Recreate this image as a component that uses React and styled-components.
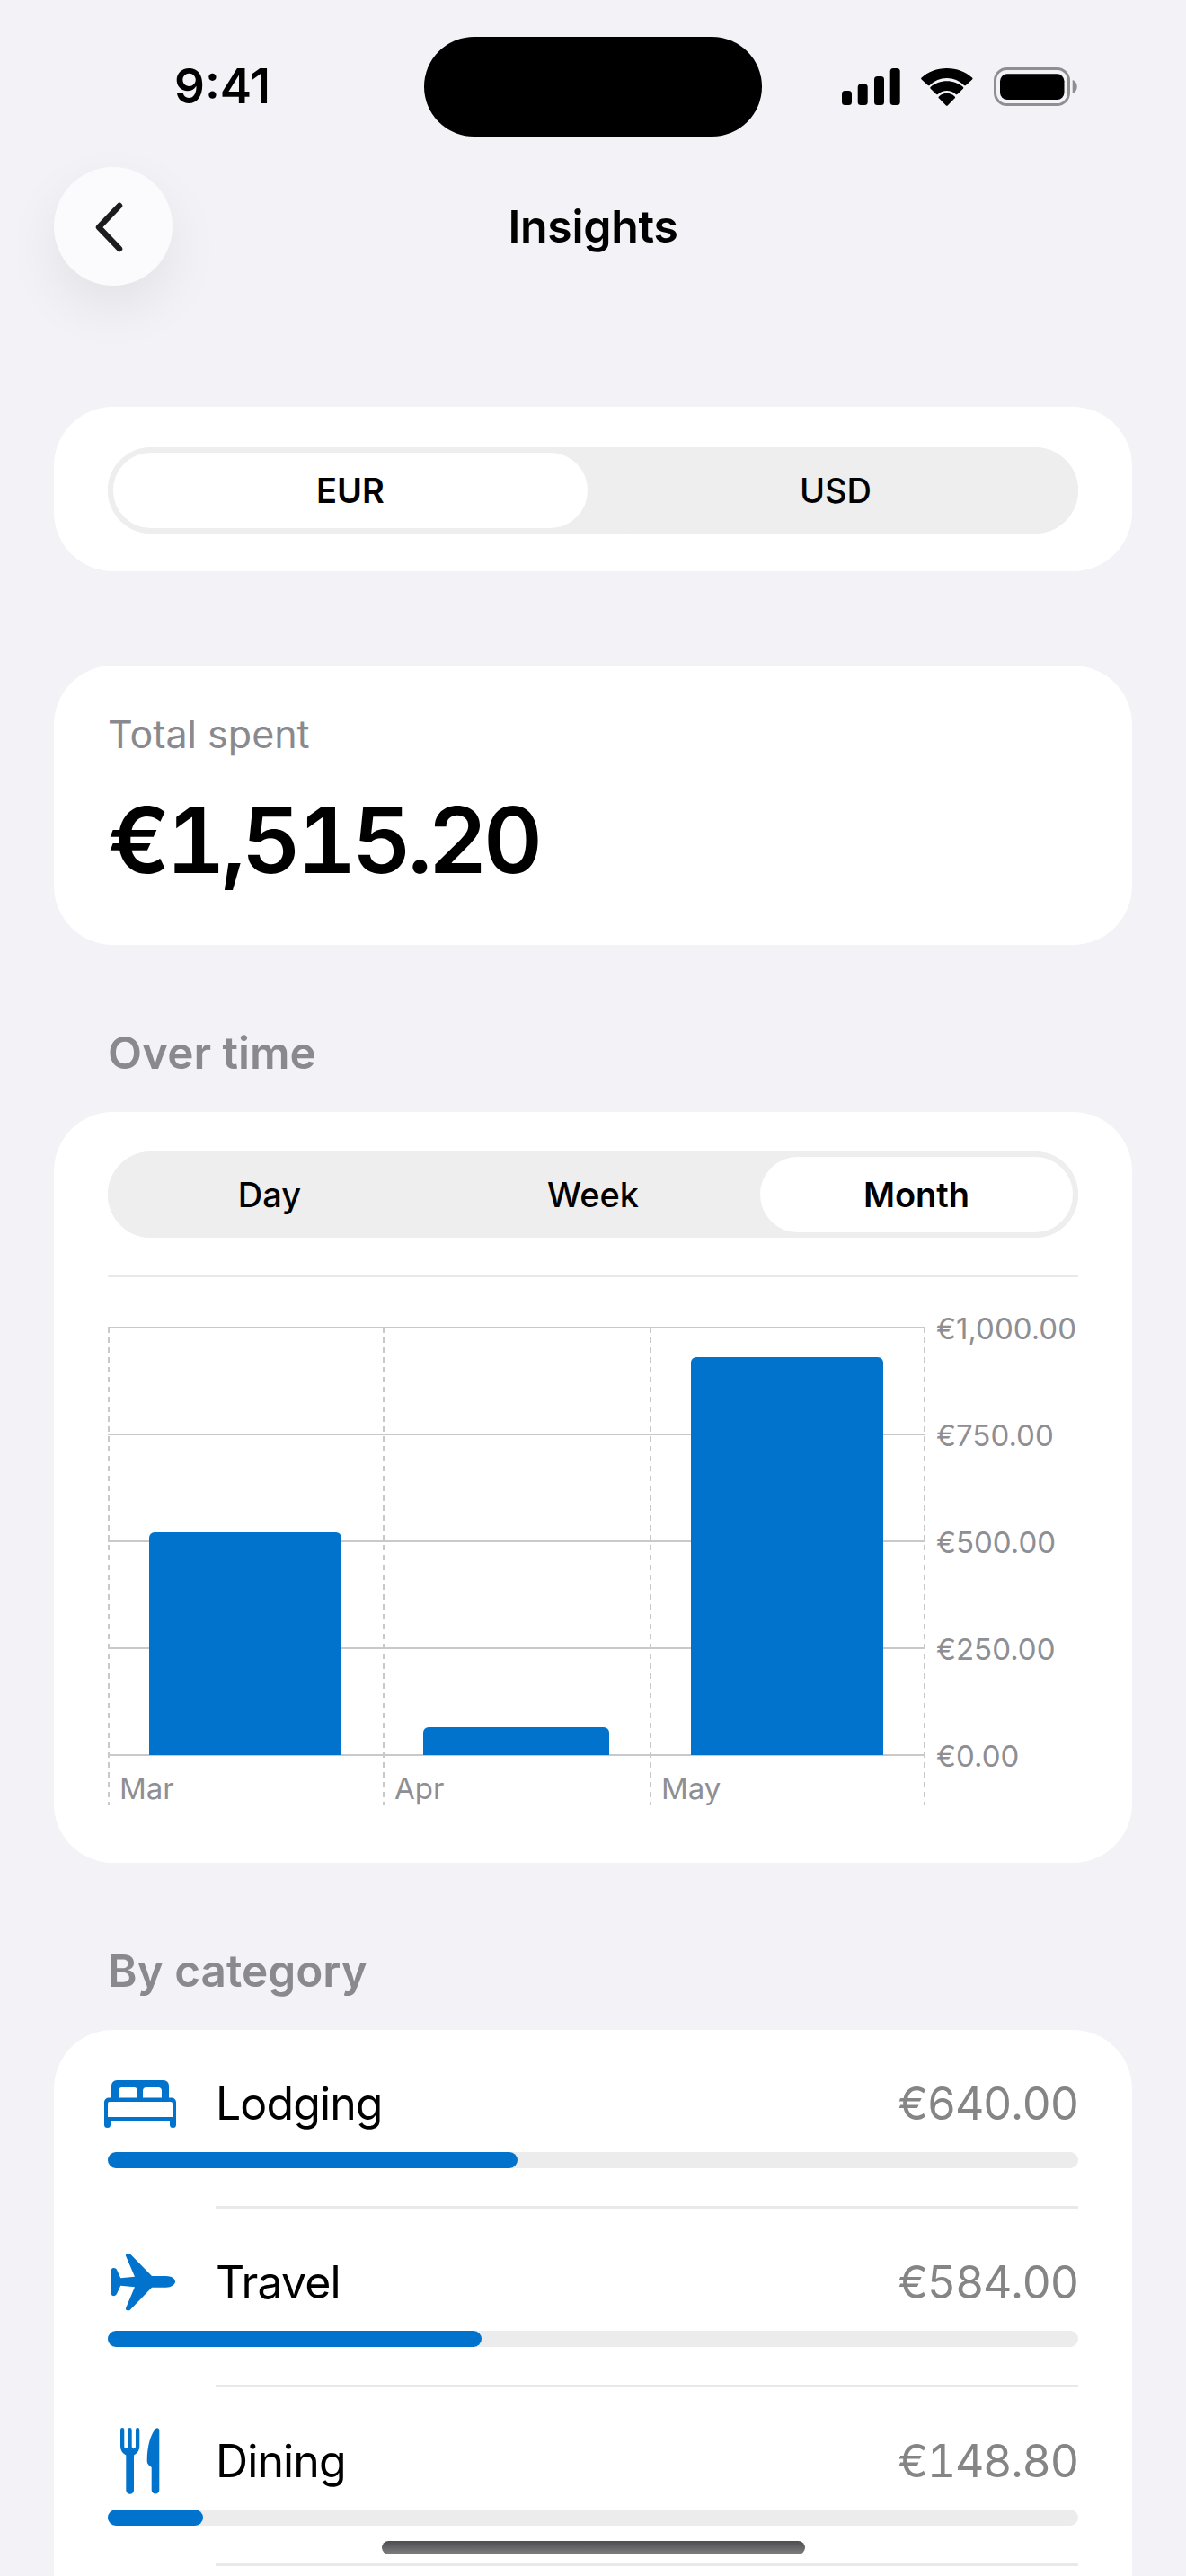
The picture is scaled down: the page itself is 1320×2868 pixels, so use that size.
import React from 'react'
import styled, { createGlobalStyle } from 'styled-components'

const GlobalStyle = createGlobalStyle`
  html, body {
    margin: 0;
    padding: 0;
    background: #f2f2f7;
    font-family: Inter, "Liberation Sans", sans-serif;
  }
`

const total = 1515.2

const categories = [
  { name: 'Lodging', amount: 640, Icon: BedIcon },
  { name: 'Travel', amount: 584, Icon: PlaneIcon },
  { name: 'Dining', amount: 148.8, Icon: DiningIcon },
]

const baseline = 502

const gridLines = [
  { y: 26, label: '€1,000.00' },
  { y: 145, label: '€750.00' },
  { y: 264, label: '€500.00' },
  { y: 383, label: '€250.00' },
  { y: 502, label: '€0.00' },
]

const months = [
  { x: 0, label: 'Mar', barX: 46, barWidth: 214, barTop: 254 },
  { x: 306, label: 'Apr', barX: 351, barWidth: 207, barTop: 471 },
  { x: 603, label: 'May', barX: 649, barWidth: 214, barTop: 59 },
]

const formatMoney = value =>
  '€' + value.toLocaleString('en-US', { minimumFractionDigits: 2, maximumFractionDigits: 2 })

function BedIcon() {
  return (
    <svg width="80" height="53" viewBox="0 0 80 53">
      <path
        fill="#0273cc"
        fillRule="evenodd"
        d="M14 0H66a6 6 0 0 1 6 6V19.5H75a5 5 0 0 1 5 5V49.5a3.5 3.5 0 0 1-7 0V45H7V49.5a3.5 3.5 0 0 1-7 0V24.5a5 5 0 0 1 5-5H8V6a6 6 0 0 1 6-6ZM20 8a4 4 0 0 0-4 4V19.5H37V12a4 4 0 0 0-4-4ZM47 8a4 4 0 0 0-4 4V19.5H64V12a4 4 0 0 0-4-4ZM6 24a2 2 0 0 0-2 2V41H76V26a2 2 0 0 0-2-2Z"
      />
    </svg>
  )
}

function PlaneIcon() {
  return (
    <PlaneSvg width="71" height="64" viewBox="0 0 71 64">
      <path
        fill="#0273cc"
        d="M1 16.5C3 15.6 5 16.4 6 18L10.3 27.3L26 25.7L16 2.5C15.5 .8 17 0 19.3 0C20.3 0 21 .5 21.7 1.3L45 25H61C66.5 25 71 27.8 71 31.3C71 34.9 66.5 37.7 61 37.7H45L21.7 61.7C21 62.6 20.3 63.3 19.3 63.3C17 63.3 15.5 62.5 16 60.8L26 37.3L10.3 35.7L6 44.7C5 46.7 3 47.7 1 46.8C.3 46.5 0 46 0 45.3V18C0 17.3 .3 16.8 1 16.5Z"
      />
    </PlaneSvg>
  )
}

function DiningIcon() {
  return (
    <svg width="44" height="74" viewBox="0 0 44 74">
      <path
        fill="#0273cc"
        d="M0 2.2a2.15 2.15 0 0 1 4.3 0V21a2 2 0 0 0 4 0V2.2a2.2 2.2 0 0 1 4.4 0V21a2.15 2.15 0 0 0 4.3 0V2.2a2.15 2.15 0 0 1 4.3 0V20c0 5-2 8-6.3 10.5V69.4a4.35 4.35 0 0 1-8.7 0V30.5C2 28 0 25 0 20Z"
      />
      <path
        fill="#0273cc"
        d="M43.3 3V69.3a4.3 4.3 0 0 1-8.6 0V44L31.7 41.5C30 40 29.7 38.5 29.7 36C29.7 20 34 7 39 1.2C41 -.7 43.3 .5 43.3 3Z"
      />
    </svg>
  )
}

function SignalIcon() {
  return (
    <svg width="65" height="41" viewBox="0 0 65 41">
      <rect x="0" y="25" width="11" height="16" rx="3.5" />
      <rect x="17.7" y="17.5" width="11" height="23.5" rx="3.5" />
      <rect x="36" y="9" width="11" height="32" rx="3.5" />
      <rect x="53.7" y="0" width="11" height="41" rx="3.5" />
    </svg>
  )
}

function WifiIcon() {
  return (
    <svg width="58" height="42" viewBox="0 0 58 42">
      <path d="M.6 10.6C8 3.9 18 0 28.8 0S49.7 3.9 57 10.6c.7.6.7 1.3.1 1.9l-7.2 6.4c-.6.6-1.2.6-1.9 0C42.8 14 36 11 28.8 11S14.9 14 9.7 18.9c-.6.6-1.3.6-1.9 0L.7 12.5C0 11.9 0 11.2.6 10.6Z" />
      <path d="M10.8 20.8C15.5 16.8 21.9 14.3 28.8 14.3S42 16.8 46.8 20.8c.7.6.7 1.3.1 1.9l-6.2 6.1c-.6.6-1.2.6-1.9.1C36.1 26.6 32.6 25 28.8 25s-7.3 1.6-10 3.9c-.6.5-1.3.5-1.9-.1l-6.2-6.1c-.6-.6-.6-1.3.1-1.9Z" />
      <path d="M20 31.4c2.4-2.2 5.5-3.6 8.8-3.6s6.4 1.4 8.8 3.6c.7.6.7 1.3.1 1.9l-7.8 7.9c-.6.7-1.6.7-2.2 0l-7.8-7.9c-.6-.6-.6-1.3.1-1.9Z" />
    </svg>
  )
}

function BatteryIcon() {
  return (
    <svg width="93" height="43" viewBox="0 0 93 43">
      <rect x="1.5" y="1.5" width="82" height="40" rx="13" fill="none" stroke="#8e8e93" strokeWidth="3" />
      <rect x="7" y="7.3" width="71.5" height="28.7" rx="8" />
      <path fill="#8e8e93" d="M87.7 14c3 .8 5 3.8 5 7.5s-2 6.7-5 7.5Z" />
    </svg>
  )
}

function ChevronIcon() {
  return (
    <svg width="132" height="132" viewBox="0 0 132 132">
      <path
        d="M73 43L50 67L73 91"
        fill="none"
        stroke="#1c1c1e"
        strokeWidth="6.5"
        strokeLinecap="round"
        strokeLinejoin="round"
      />
    </svg>
  )
}

function SpendingChart() {
  return (
    <ChartSvg viewBox="0 0 1080 562">
      {gridLines.map(line => (
        <g key={line.label}>
          <GridLine x1="0" x2="909" y1={line.y} y2={line.y} />
          <AxisLabel x="922" y={line.y + 13}>{line.label}</AxisLabel>
        </g>
      ))}
      {months.map(month => (
        <g key={month.label}>
          <DashLine x1={month.x + 1} x2={month.x + 1} y1="26" y2="558" />
          <AxisLabel x={month.x + 13} y="551">{month.label}</AxisLabel>
          <path
            fill="#0273cc"
            d={`M${month.barX} ${baseline}V${month.barTop + 6}a6 6 0 0 1 6-6H${month.barX + month.barWidth - 6}a6 6 0 0 1 6 6V${baseline}Z`}
          />
        </g>
      ))}
      <DashLine x1="909" x2="909" y1="26" y2="558" />
    </ChartSvg>
  )
}

function App() {
  return (
    <Page>
      <GlobalStyle />
      <StatusBar>
        <Time>9:41</Time>
        <Island />
        <StatusIcons>
          <SignalIcon />
          <WifiIcon />
          <BatteryIcon />
        </StatusIcons>
      </StatusBar>

      <Header>
        <BackButton aria-label="Back">
          <ChevronIcon />
        </BackButton>
        <Title>Insights</Title>
      </Header>

      <CurrencyCard>
        <Segments $count={2}>
          <Segment $active>EUR</Segment>
          <Segment>USD</Segment>
        </Segments>
      </CurrencyCard>

      <TotalCard>
        <TotalLabel>Total spent</TotalLabel>
        <TotalAmount>{formatMoney(total)}</TotalAmount>
      </TotalCard>

      <SectionTitle>Over time</SectionTitle>
      <ChartCard>
        <Segments $count={3}>
          <Segment>Day</Segment>
          <Segment>Week</Segment>
          <Segment $active>Month</Segment>
        </Segments>
        <CardDivider />
        <SpendingChart />
      </ChartCard>

      <SectionTitle>By category</SectionTitle>
      <CategoryCard>
        {categories.map(({ name, amount, Icon }) => (
          <CategoryRow key={name}>
            <CategoryHead>
              <IconSlot>
                <Icon />
              </IconSlot>
              <CategoryName>{name}</CategoryName>
              <CategoryAmount>{formatMoney(amount)}</CategoryAmount>
            </CategoryHead>
            <Track>
              <Fill style={{ width: `${(amount / total) * 100}%` }} />
            </Track>
            <RowDivider />
          </CategoryRow>
        ))}
      </CategoryCard>

      <HomeIndicator />
    </Page>
  )
}

const Page = styled.div`
  position: relative;
  width: 1320px;
  height: 2868px;
  overflow: hidden;
  background: #f2f2f7;
  color: #000;
`

const StatusBar = styled.div`
  display: grid;
  grid-template-columns: 472px 376px 1fr;
  align-items: center;
  height: 111px;
  padding-top: 41px;
`

const Time = styled.div`
  padding-left: 194px;
  font-size: 53px;
  font-weight: 600;
  line-height: 111px;
`

const Island = styled.div`
  height: 111px;
  border-radius: 56px;
  background: #000;
`

const StatusIcons = styled.div`
  display: flex;
  align-items: center;
  gap: 23px;
  padding-left: 89px;
`

const Header = styled.header`
  position: relative;
  display: flex;
  justify-content: center;
  align-items: center;
  height: 132px;
  margin-top: 34px;
`

const BackButton = styled.button`
  position: absolute;
  left: 60px;
  top: 0;
  width: 132px;
  height: 132px;
  padding: 0;
  border: 0;
  border-radius: 50%;
  background: #fbfbfd;
  box-shadow: 0 24px 60px rgba(0, 0, 0, 0.07);
`

const Title = styled.h1`
  margin: 0;
  font-size: 50px;
  font-weight: 600;
  line-height: 60px;
  letter-spacing: -0.3px;
`

const Card = styled.section`
  margin: 0 60px;
  border-radius: 66px;
  background: #fff;
`

const CurrencyCard = styled(Card)`
  margin-top: 135px;
  padding: 45px 60px 42px;
`

const TotalCard = styled(Card)`
  margin-top: 105px;
  padding: 51px 60px 57px;
`

const ChartCard = styled(Card)`
  padding: 44px 60px 60px;
`

const CategoryCard = styled(Card)`
  padding: 0 60px 120px;
`

const Segments = styled.div`
  display: grid;
  grid-template-columns: repeat(${props => props.$count}, 1fr);
  height: 96px;
  border-radius: 48px;
  background: #eeeeee;
`

const Segment = styled.div`
  display: flex;
  justify-content: center;
  align-items: center;
  border: 6px solid #eeeeee;
  border-radius: 48px;
  background: ${props => (props.$active ? '#fff' : 'transparent')};
  font-size: 38px;
  font-weight: ${props => (props.$active ? 580 : 450)};
`

const TotalLabel = styled.div`
  font-size: 43px;
  line-height: 50px;
  color: #8a8a8e;
`

const TotalAmount = styled.div`
  margin-top: 33px;
  font-size: 102px;
  font-weight: 560;
  line-height: 120px;
  font-variant-numeric: tabular-nums;
  letter-spacing: -4.5px;
`

const SectionTitle = styled.h2`
  margin: 90px 60px 36px;
  padding-left: 60px;
  font-size: 49.5px;
  font-weight: 600;
  line-height: 60px;
  color: #8a8a8e;
`

const CardDivider = styled.div`
  height: 3px;
  margin: 41px 0 30px;
  background: #e9e9ea;
`

const ChartSvg = styled.svg`
  display: block;
  width: 1080px;
  height: 562px;
`

const GridLine = styled.line`
  stroke: #c9c9cb;
  stroke-width: 2;
`

const DashLine = styled.line`
  stroke: #c9c9cb;
  stroke-width: 2;
  stroke-dasharray: 6 5;
`

const AxisLabel = styled.text`
  font-size: 33px;
  fill: #8e8e93;
`

const CategoryRow = styled.div`
  padding-top: 40px;
`

const CategoryHead = styled.div`
  display: flex;
  align-items: center;
  height: 84px;
`

const IconSlot = styled.div`
  display: flex;
  justify-content: center;
  flex: none;
  width: 72px;
  margin-right: 48px;

  svg {
    flex: none;
  }
`

const PlaneSvg = styled.svg`
  margin-left: 7px;
`

const CategoryName = styled.div`
  flex: 1;
  font-size: 50px;
  line-height: 60px;
  letter-spacing: -0.9px;
`

const CategoryAmount = styled.div`
  font-size: 50px;
  line-height: 60px;
  font-variant-numeric: tabular-nums;
  letter-spacing: -1.2px;
  color: #858585;
`

const Track = styled.div`
  height: 18px;
  margin-top: 12px;
  border-radius: 9px;
  background: #ececec;
`

const Fill = styled.div`
  height: 100%;
  border-radius: 9px;
  background: #0273cc;
`

const RowDivider = styled.div`
  height: 3px;
  margin: 42px 0 0 120px;
  background: #e9e9ea;
`

const HomeIndicator = styled.div`
  position: absolute;
  left: 425px;
  top: 2829px;
  width: 471px;
  height: 15px;
  border-radius: 8px;
  background: linear-gradient(#4d4d4f, #808082);
`

export default App
